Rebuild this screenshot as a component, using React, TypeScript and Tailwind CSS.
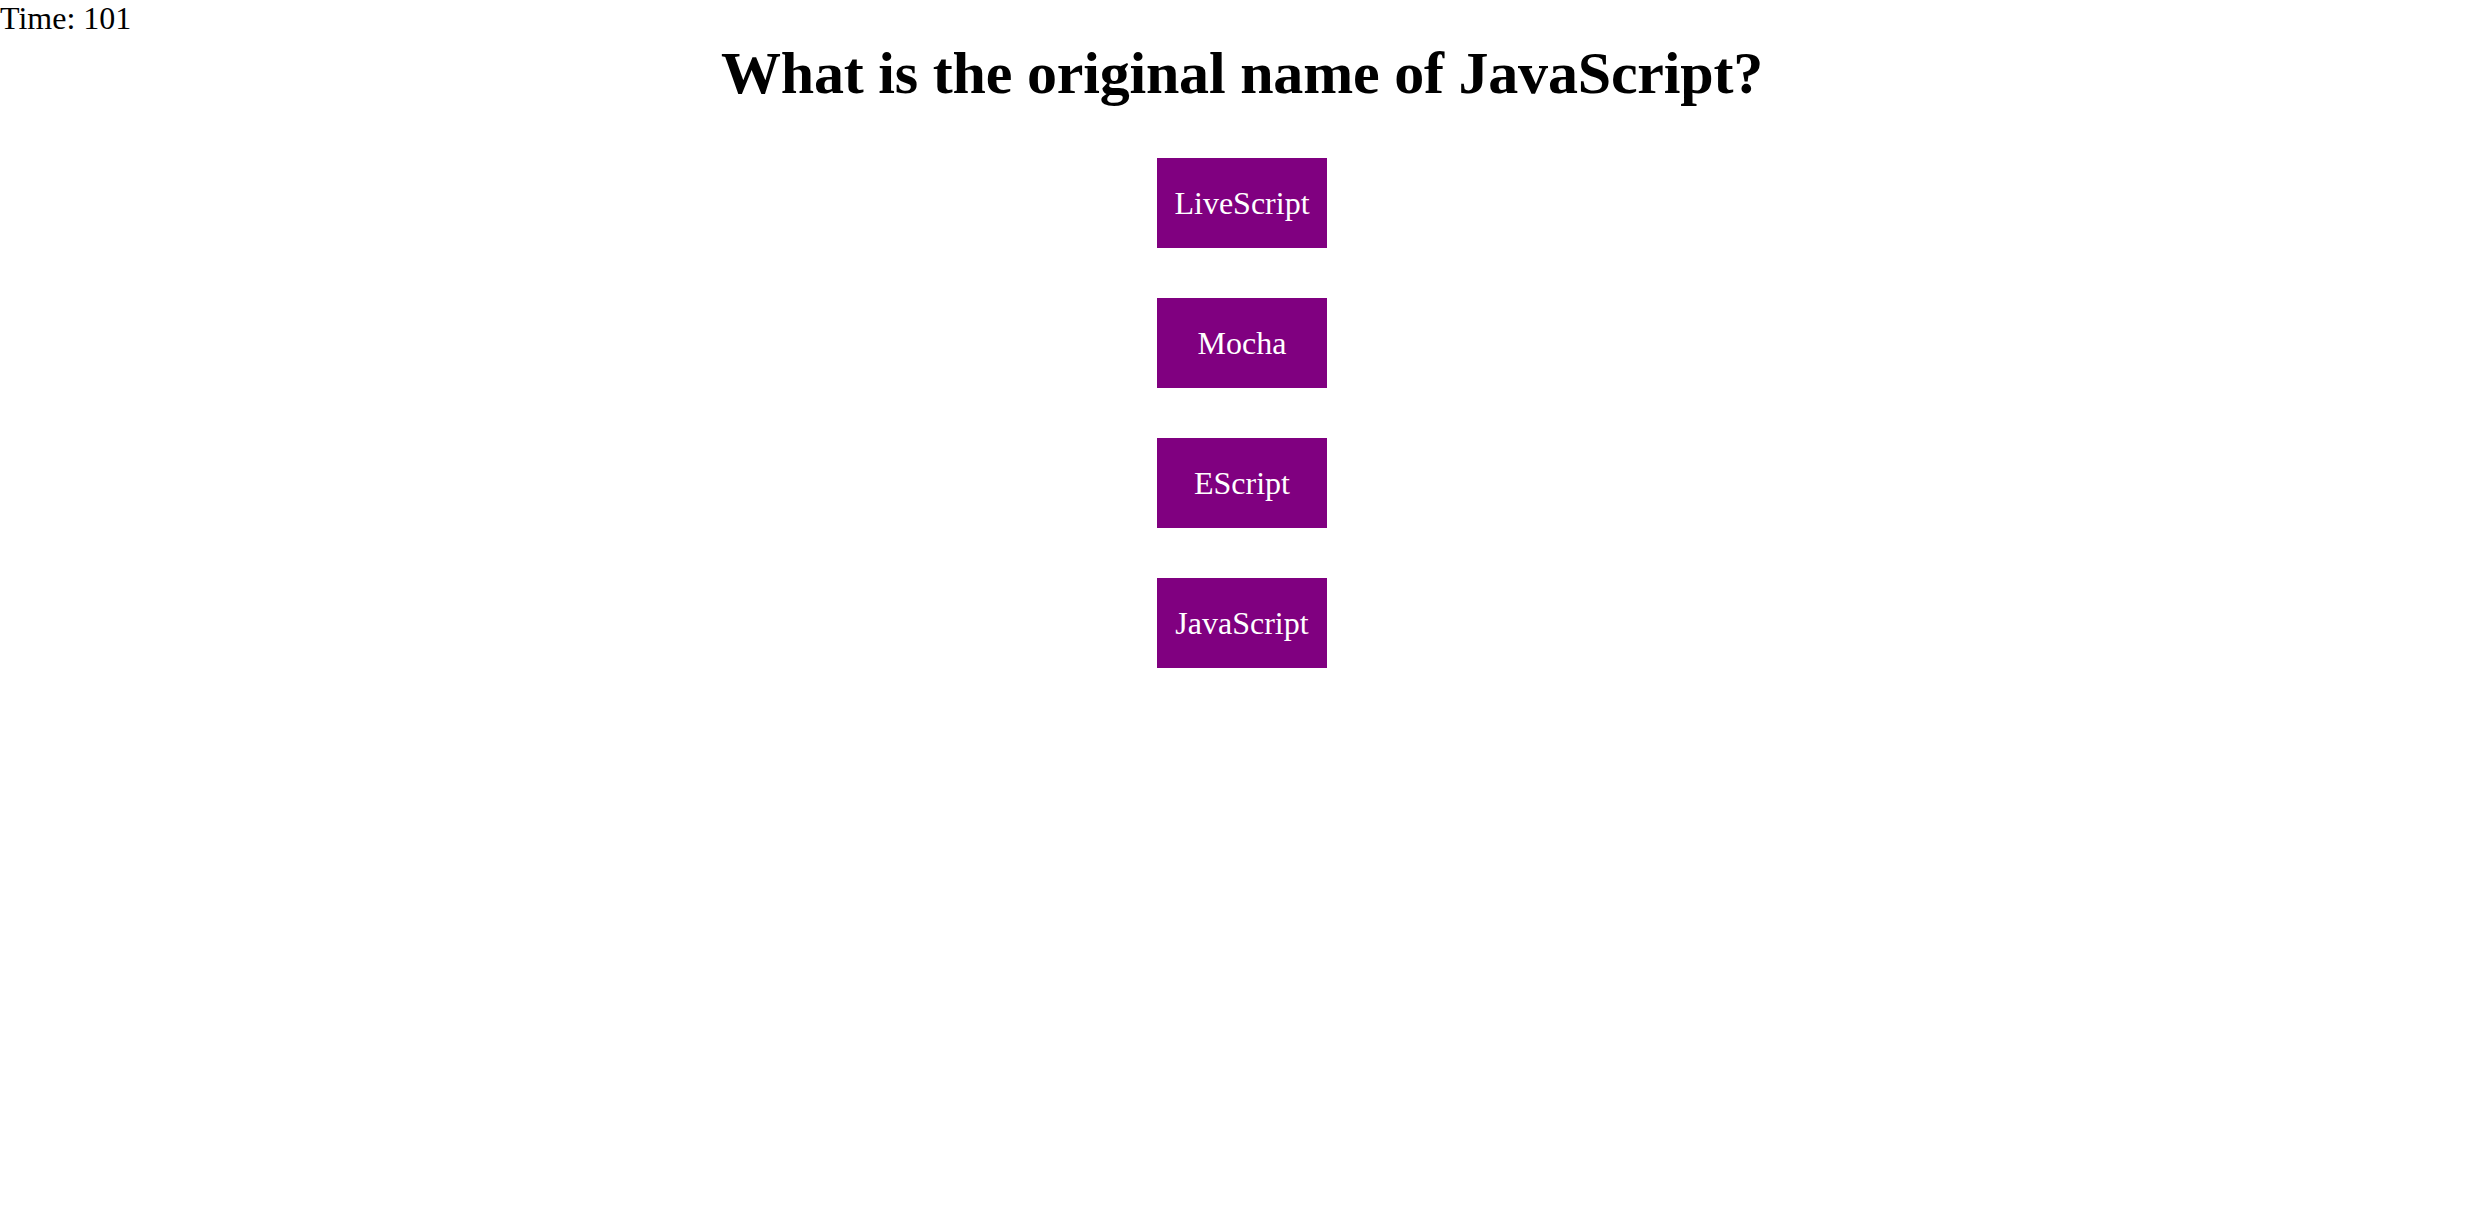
const answers = ["LiveScript", "Mocha", "EScript", "JavaScript"];

export default function App() {
  return (
    <div className="min-h-screen bg-white text-black font-['Liberation_Serif','Times_New_Roman',serif]">
      {/* Timer */}
      <div className="text-[32px] leading-[36px]">Time: 101</div>

      {/* Question */}
      <h1 className="text-center text-[60px] font-bold leading-[74px] tracking-[-0.2px]">
        What is the original name of JavaScript?
      </h1>

      {/* Answers */}
      <div className="mt-[48px] flex flex-col items-center gap-[50px]">
        {answers.map((answer) => (
          <button
            key={answer}
            className="w-[170px] h-[90px] bg-[#800080] text-white text-[32px] flex items-center justify-center"
          >
            {answer}
          </button>
        ))}
      </div>
    </div>
  );
}
